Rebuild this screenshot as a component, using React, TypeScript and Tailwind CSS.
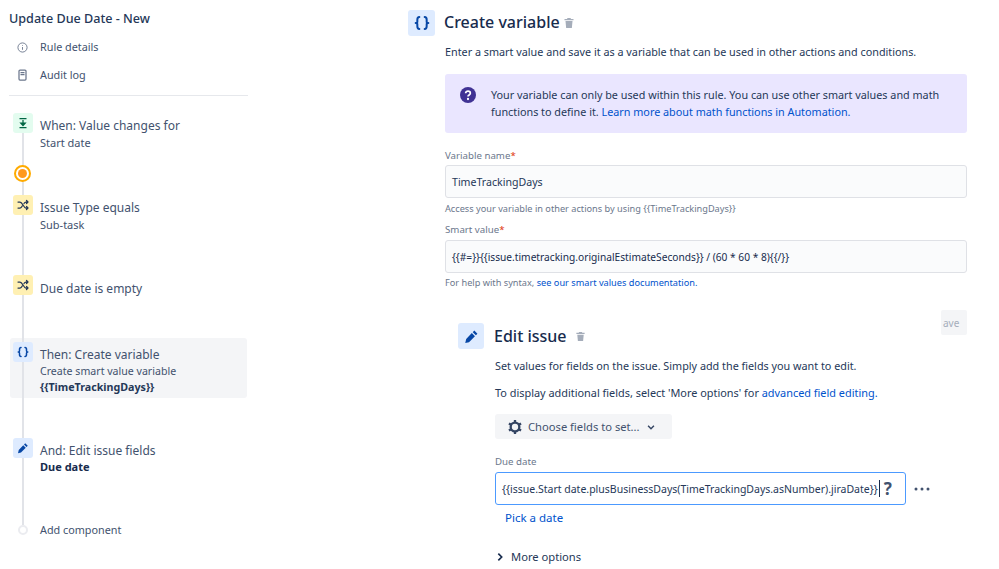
import React from "react";

const Braces = ({ s = 12 }: { s?: number }) => (
  <svg width={s} height={s} viewBox="0 0 24 24" fill="none" stroke="#0747A6" strokeWidth="3" strokeLinecap="round" strokeLinejoin="round">
    <path d="M8 3C5 3 5 5 5 7v3c0 1-1 2-2.500 2C4 12 5 13 5 14v3c0 2 0 4 3 4" />
    <path d="M16 3c3 0 3 2 3 4v3c0 1 1 2 2.500 2-1.500 0-2.500 1-2.500 2v3c0 2 0 4-3 4" />
  </svg>
);
const Pencil = ({ s = 12 }: { s?: number }) => (
  <svg width={s} height={s} viewBox="0 0 24 24" fill="#0747A6">
    <path d="M16.500 2.500l5 5-2.500 2.500-5-5zM12.500 6.500l5 5L8 21l-6 1.500L3.500 16z" />
  </svg>
);
const Shuffle = () => (
  <svg width="12" height="12" viewBox="0 0 24 24" fill="none" stroke="#253858" strokeWidth="2.500" strokeLinecap="round" strokeLinejoin="round">
    <path d="M2 6h4c5 0 7 12 12 12h4M2 18h4c2 0 3.500-2 4.500-4M14 9c1-2 2-3 4-3h4M19 3l3 3-3 3M19 15l3 3-3 3" />
  </svg>
);
const Trash = ({ s = 12 }: { s?: number }) => (
  <svg width={s} height={s} viewBox="0 0 24 24" fill="#A5ADBA">
    <path d="M9 2h6l1 2h5v2.500H3V4h5zM5 8h14l-1.300 14H6.300z" />
  </svg>
);

const Step = ({ bg, icon, className, children }: { bg: string; icon: React.ReactNode; className?: string; children: React.ReactNode }) => (
  <div className={`flex items-start ${className ?? ""}`}>
    <div className={`relative z-10 ml-[4px] flex h-[20px] w-[20px] shrink-0 items-center justify-center rounded-[3px] ${bg}`}>{icon}</div>
    <div className="ml-[7px] text-[#42526E]">{children}</div>
  </div>
);

export default function App() {
  return (
    <div className="flex h-[569px] w-[999px] overflow-hidden bg-white text-[10.800px] leading-[18px] text-[#172B4D]" style={{ fontFamily: '"Noto Sans", sans-serif' }}>
      <aside className="relative ml-[9px] w-[239px] shrink-0">
        <h1 className="mt-[10px] text-[12.600px] font-medium leading-[18px] text-[#253858]">Update Due Date - New</h1>
        <div className="mt-[10px] flex h-[18px] items-center text-[#42526E]">
          <svg className="ml-[8px]" width="11" height="11" viewBox="0 0 24 24" fill="none" stroke="#6B778C" strokeWidth="2">
            <circle cx="12" cy="12" r="10" />
            <path d="M12 11v6M12 7v1.500" />
          </svg>
          <span className="ml-[12px]">Rule details</span>
        </div>
        <div className="mt-[10px] flex h-[18px] items-center text-[#42526E]">
          <svg className="ml-[8px]" width="11" height="12" viewBox="0 0 22 24" fill="none" stroke="#6B778C" strokeWidth="2.500">
            <rect x="4" y="2" width="14" height="20" rx="2" />
            <path d="M7 7h8M7 11h8" />
          </svg>
          <span className="ml-[12px]">Audit log</span>
        </div>
        <div className="mt-[11px] h-px bg-[#E6E8EC]" />

        <div className="absolute left-[13px] top-[133px] h-[392px] w-[1.500px] bg-[#E1E3E8]" />

        <Step className="mt-[17px]" bg="bg-[#E3FCEF]" icon={
          <svg width="12" height="12" viewBox="0 0 24 24" fill="none" stroke="#006644" strokeWidth="2.500"><path d="M5 3h14M5 21h14M12 6v9" /><path d="M7.500 12h9L12 17z" fill="#006644" /></svg>
        }>
          <div className="pt-[4px] text-[12px] leading-[17px]">When: Value changes for</div>
          <div className="text-[11px]">Start date</div>
        </Step>

        <div className="relative z-10 ml-[5px] mt-[13px] flex h-[17px] w-[17px] items-center justify-center rounded-full border-2 border-[#FFAB00] bg-white">
          <div className="h-[9px] w-[9px] rounded-full bg-[#FF991F]" />
        </div>

        <Step className="mt-[13px]" bg="bg-[#FFF0B3]" icon={<Shuffle />}>
          <div className="pt-[4px] text-[12px] leading-[17px]">Issue Type equals</div>
          <div className="text-[11px]">Sub-task</div>
        </Step>

        <Step className="mt-[41px]" bg="bg-[#FFF0B3]" icon={<Shuffle />}>
          <div className="pt-[5px] text-[12px]">Due date is empty</div>
        </Step>

        <div className="mx-[1px] mt-[40px] h-[60px] rounded-[3px] bg-[#F4F5F7] pt-[4px]">
          <Step className="-ml-[1px]" bg="bg-[#DEEBFF]" icon={<Braces />}>
            <div className="pt-[4px] text-[12px] leading-[17px]">Then: Create variable</div>
            <div className="text-[10.600px] leading-[16px]">Create smart value variable</div>
            <div className="text-[10.700px] font-bold leading-[16px] text-[#253858]">{"{{TimeTrackingDays}}"}</div>
          </Step>
        </div>

        <Step className="mt-[40px]" bg="bg-[#DEEBFF]" icon={<Pencil />}>
          <div className="pt-[5px] text-[12px] leading-[16px]">And: Edit issue fields</div>
          <div className="text-[11px] font-bold leading-[15px] text-[#172B4D]">Due date</div>
        </Step>

        <div className="mt-[47px] flex items-center">
          <div className="relative z-10 ml-[9px] h-[10px] w-[10px] rounded-full border-2 border-[#EBECF0] bg-white" />
          <span className="ml-[12px] text-[#42526E]">Add component</span>
        </div>
      </aside>

      <main className="relative ml-[160px] w-[559px] shrink-0">
        <div className="mt-[10px] flex items-center">
          <div className="flex h-[26px] w-[27px] items-center justify-center rounded-[3px] bg-[#DEEBFF]"><Braces s={16} /></div>
          <h2 className="ml-[9px] pb-[2px] text-[16px] font-medium leading-[24px] text-[#172B4D]">Create variable</h2>
          <span className="ml-[3px]"><Trash /></span>
        </div>
        <div className="ml-[37px]">
          <p className="mt-[7px] text-[#253858]">Enter a smart value and save it as a variable that can be used in other actions and conditions.</p>
          <div className="mt-[13px] flex h-[59px] rounded-[3px] bg-[#EAE6FF] pl-[15px] pt-[12px]">
            <svg className="mt-[1px] shrink-0" width="16" height="16" viewBox="0 0 24 24">
              <circle cx="12" cy="12" r="12" fill="#403294" />
              <path d="M8.500 9.500C8.500 7.500 10 6.300 12 6.300s3.500 1.200 3.500 3c0 2.700-3.500 2.500-3.500 5" fill="none" stroke="#fff" strokeWidth="2.600" />
              <circle cx="12" cy="18" r="1.700" fill="#fff" />
            </svg>
            <p className="ml-[15px] leading-[17px] text-[#253858]">
              Your variable can only be used within this rule. You can use other smart values and math<br />
              functions to define it. <span className="text-[#0052CC]">Learn more about math functions in Automation.</span>
            </p>
          </div>
          <label className="mt-[15px] block text-[9.700px] leading-[16px] text-[#6B778C]">Variable name<span className="text-[#DE350B]">*</span></label>
          <div className="mt-[1px] flex h-[33px] items-center rounded-[3px] border border-[#DFE1E6] bg-[#FAFBFC] pl-[6px] text-[10.600px] text-[#253858]">TimeTrackingDays</div>
          <p className="mt-[4px] text-[9.200px] leading-[14px] text-[#6B778C]">{"Access your variable in other actions by using {{TimeTrackingDays}}"}</p>
          <label className="mt-[6px] block text-[9.700px] leading-[16px] text-[#6B778C]">Smart value<span className="text-[#DE350B]">*</span></label>
          <div className="mt-[2px] flex h-[33px] items-center rounded-[3px] border border-[#DFE1E6] bg-[#FAFBFC] pl-[6px] text-[10.200px] text-[#172B4D]">{"{{#=}}{{issue.timetracking.originalEstimateSeconds}} / (60 * 60 * 8){{/}}"}</div>
          <p className="mt-[3px] text-[9.200px] leading-[14px] text-[#6B778C]">For help with syntax, <span className="text-[#0052CC]">see our smart values documentation.</span></p>
        </div>

        <div className="ml-[50px]">
          <div className="mt-[33px] flex items-center">
            <div className="flex h-[26px] w-[26px] items-center justify-center rounded-[3px] bg-[#DEEBFF]"><Pencil s={15} /></div>
            <h2 className="ml-[10px] text-[16px] font-medium leading-[26px] text-[#172B4D]">Edit issue</h2>
            <span className="ml-[8px]"><Trash s={11} /></span>
          </div>
          <div className="ml-[37px]">
            <p className="mt-[8px] text-[#253858]">Set values for fields on the issue. Simply add the fields you want to edit.</p>
            <p className="mt-[9px] text-[10.900px] text-[#253858]">To display additional fields, select 'More options' for <span className="text-[#0052CC]">advanced field editing.</span></p>
            <div className="mt-[12px] flex h-[25px] w-[177px] items-center rounded-[3px] bg-[#F4F5F7] pl-[12px] text-[11.200px] text-[#42526E]">
              <svg width="16" height="16" viewBox="0 0 24 24" fill="none" stroke="#344563" strokeWidth="3.500">
                <circle cx="12" cy="12" r="6.500" />
                <path d="M12 1.500v4M12 18.500v4M2.900 6.700l3.500 2M17.600 15.300l3.500 2M2.900 17.300l3.500-2M17.600 8.700l3.500-2" />
              </svg>
              <span className="ml-[5px]">Choose fields to set...</span>
              <svg className="ml-[6px]" width="10" height="10" viewBox="0 0 24 24" fill="none" stroke="#344563" strokeWidth="3.500"><path d="M5 9l7 7 7-7" /></svg>
            </div>
            <label className="mt-[15px] block text-[9.700px] leading-[16px] text-[#6B778C]">Due date</label>
            <div className="mt-[2px] flex items-center">
              <div className="flex h-[33px] w-[411px] items-center rounded-[3px] border border-[#4C9AFF] bg-white pl-[6px] text-[10.500px] text-[#253858]">
                <span className="whitespace-nowrap">{"{{issue.Start date.plusBusinessDays(TimeTrackingDays.asNumber).jiraDate}}"}</span>
                <span className="ml-[1px] h-[17px] w-px bg-[#172B4D]" />
                <span className="ml-[4px] text-[17px] font-bold text-[#42526E]">?</span>
              </div>
              <svg className="ml-[8px]" width="16" height="4" viewBox="0 0 16 4" fill="#42526E"><circle cx="2" cy="2" r="1.500" /><circle cx="8" cy="2" r="1.500" /><circle cx="14" cy="2" r="1.500" /></svg>
            </div>
            <div className="ml-[10px] mt-[4px] text-[11.500px] text-[#0052CC]">Pick a date</div>
          </div>
          <div className="ml-[37px] mt-[21px] flex items-center text-[11.200px] text-[#253858]">
            <svg width="10" height="10" viewBox="0 0 24 24" fill="none" stroke="#172B4D" strokeWidth="4"><path d="M8 4l8 8-8 8" /></svg>
            <span className="ml-[6px]">More options</span>
          </div>
        </div>

        <div className="absolute left-[533px] top-[310px] flex h-[25px] w-[26px] items-center justify-start rounded-[2px] bg-[#F4F5F7] pl-[2px] text-[10px] text-[#A5ADBA]">
          <span className="whitespace-nowrap">ave</span>
        </div>
      </main>
    </div>
  );
}
